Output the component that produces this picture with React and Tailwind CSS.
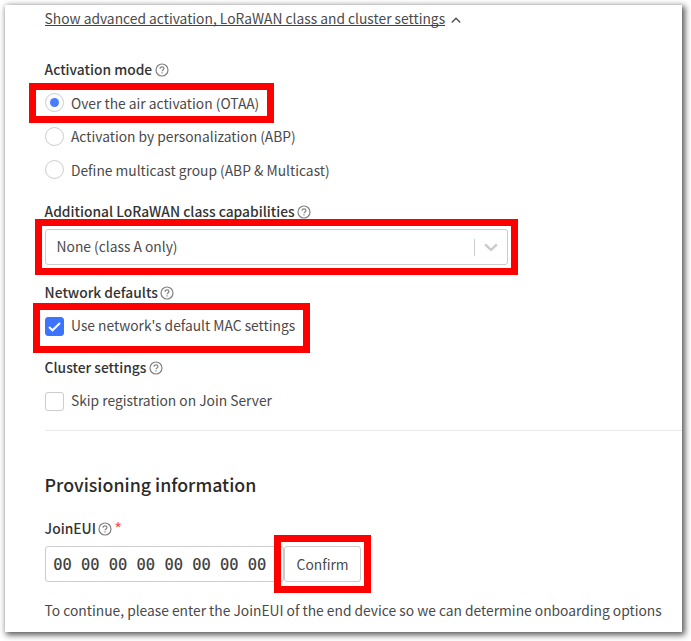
const SANS = "font-['Noto_Sans_CJK_SC',sans-serif]";

function Help() {
  return (
    <svg className="mt-[1px] ml-[2.6px] size-[14px] shrink-0" viewBox="0 0 14 14" fill="none" stroke="#808080" strokeWidth="1.2">
      <circle cx="7" cy="7" r="6" />
      <path d="M5 5.7c0-1.2.85-1.9 2-1.9s1.95.7 1.95 1.7c0 1.35-1.95 1.45-1.95 2.75" />
      <path d="M7 9.3v1.3" />
    </svg>
  );
}

function Label({ className, children, required }) {
  return (
    <div className={`flex h-5 items-center ${className}`}>
      <span className="text-[13.8px] leading-5 font-medium whitespace-nowrap text-[#333]">{children}</span>
      <Help />
      {required && <span className="ml-[2px] text-[15px] leading-5 font-medium text-[#f55]">*</span>}
    </div>
  );
}

function Highlight({ className }) {
  return <div className={`absolute border-7 border-[#f00] ${className}`} />;
}

function Radio({ checked, className, children }) {
  return (
    <label className={`relative flex items-center ${className}`}>
      <span className="flex size-[19px] shrink-0 items-center justify-center rounded-full border border-[#ccc]">
        {checked && <span className="size-[9px] rounded-full bg-[#4a7dfb]" />}
      </span>
      <span className="ml-[7.4px] text-[13.8px] leading-5 whitespace-nowrap">{children}</span>
      {checked && <Highlight className="top-[-3px] left-[-16px] h-10 w-[245px]" />}
    </label>
  );
}

function Check({ checked, className, children }) {
  return (
    <label className={`relative flex h-[33px] items-center ${className}`}>
      <span className={`mt-[2px] flex size-[19px] shrink-0 items-center justify-center rounded-[3px] border ${checked ? "border-[#3d74ff] bg-[#3d74ff]" : "border-[#ccc]"}`}>
        {checked && (
          <svg className="size-[15px] shrink-0" viewBox="0 0 15 15" fill="none" stroke="#fff" strokeWidth="2">
            <path d="M2 8l3.5 3.3L13 4" />
          </svg>
        )}
      </span>
      <span className="ml-[7.4px] pb-[2px] text-[13.8px] leading-5 whitespace-nowrap">{children}</span>
      {checked && <Highlight className="top-[-6px] left-[-12px] h-[50px] w-[277px]" />}
    </label>
  );
}

export default function App() {
  return (
    <div className={`h-[641px] w-[691px] overflow-hidden bg-white pt-[5px] pl-[5px] text-[#4a4a4a] ${SANS}`}>
      <main className="flex h-[627px] w-[677px] flex-col bg-white pl-[39.6px] shadow-[2px_2px_6px_1px_rgba(0,0,0,0.65)]">
        <div className="flex h-[26px] items-start">
          <a className="h-[21px] border-b border-[#444] text-[13.8px] leading-[26px] whitespace-nowrap">
            <span>Show advanced activation, LoRaWAN class and cluster settings</span>
          </a>
          <svg className="mt-[10px] ml-[5.4px] size-[10px]" viewBox="0 0 10 10" fill="none" stroke="#555" strokeWidth="1.5">
            <path d="M.8 7.5l4.2-4.2 4.2 4.2" />
          </svg>
        </div>

        <Label className="mt-7">Activation mode</Label>
        <Radio checked className="mt-[7px] h-[33px]">Over the air activation (OTAA)</Radio>
        <Radio className="h-[34px]">Activation by personalization (ABP)</Radio>
        <Radio className="h-[33px]">Define multicast group (ABP &amp; Multicast)</Radio>

        <Label className="mt-[15px]">Additional LoRaWAN class capabilities</Label>
        <div className="relative mt-2 flex h-9 w-[463px] items-center rounded-[3px] border border-[#ccc] pl-[11px]">
          <span className="flex-1 pb-[2px] text-[13.8px] leading-5">None (class A only)</span>
          <span className="h-[17px] w-px bg-[#ccc]" />
          <svg className="mr-[9px] ml-[9px] h-[14px] w-[14px]" viewBox="0 0 14 14" fill="none" stroke="#ccc" strokeWidth="2.4" strokeLinecap="round">
            <path d="M1.8 5L7 9.8 12.2 5" />
          </svg>
          <Highlight className="top-[-11px] left-[-11px] h-14 w-[483px]" />
        </div>

        <Label className="mt-[17px]">Network defaults</Label>
        <Check checked className="mt-[7px]">Use network's default MAC settings</Check>

        <Label className="mt-[15px]">Cluster settings</Label>
        <Check className="mt-[7px]">Skip registration on Join Server</Check>

        <hr className="mt-[13px] border-[#eaeaea]" />
        <h2 className="mt-[38px] h-[31px] text-[17.8px] leading-[30px] font-medium text-[#2a2a2a]">
          <span>Provisioning information</span>
        </h2>

        <Label required className="mt-[18px]">JoinEUI</Label>
        <div className="mt-2 flex h-9">
          <div className="flex w-[239px] items-center rounded-[3px] border border-[#ccc] pt-1 pl-[7.6px] font-['DejaVu_Sans_Mono',monospace] text-[15.4px] whitespace-pre text-[#3a3a3a] [-webkit-text-stroke:0.2px_#3a3a3a]">
            00 00 00 00 00 00 00 00
          </div>
          <div className="relative flex w-[77px] items-center justify-center rounded-[3px] border border-[#ccc] pl-px text-[13.8px]">
            Confirm
            <Highlight className="top-[-12px] left-[-11px] h-[58px] w-[97px]" />
          </div>
        </div>
        <p className="mt-[18px] h-5 text-[13.8px] leading-5 whitespace-nowrap">
          <span>To continue, please enter the JoinEUI of the end device so we can determine onboarding options</span>
        </p>
      </main>
    </div>
  );
}
